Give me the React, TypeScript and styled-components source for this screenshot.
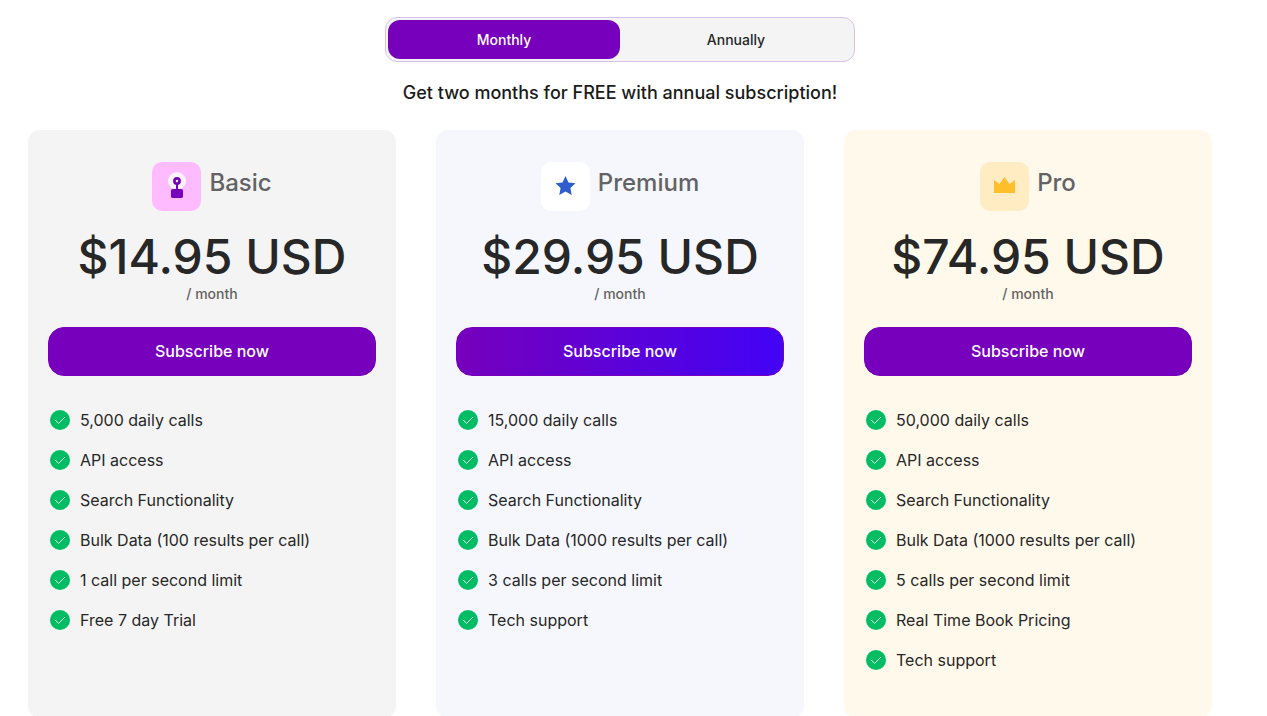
import React, { useState } from "react";
import styled, { createGlobalStyle } from "styled-components";

const GlobalStyle = createGlobalStyle`
  *, *::before, *::after { box-sizing: border-box; }
  body {
    margin: 0;
    background: #ffffff;
    color: #272727;
    font-family: Inter, "Liberation Sans", sans-serif;
    font-size: 16px;
  }
`;

const Page = styled.main`
  display: flex;
  flex-direction: column;
  align-items: center;
  padding: 17px 55px 0 28px;
`;

const Toggle = styled.div`
  display: flex;
  width: 100%;
  max-width: 470px;
  padding: 2px;
  border: 1px solid #d9c2ea;
  border-radius: 12px;
  background: #f4f4f4;
`;

const ToggleButton = styled.button<{ $active: boolean }>`
  flex: 1;
  height: 39px;
  padding: 0;
  border: 0;
  border-radius: 12px;
  background: ${(p) => (p.$active ? "#7600bc" : "transparent")};
  color: ${(p) => (p.$active ? "#ffffff" : "#272727")};
  font: 500 14px/20px Inter, "Liberation Sans", sans-serif;
  cursor: pointer;
`;

const Offer = styled.p`
  margin: 18px 0 24px;
  color: #1b1b1b;
  font-size: 18px;
  font-weight: 500;
  line-height: 26px;
  text-align: center;
`;

const Plans = styled.section`
  display: grid;
  grid-template-columns: repeat(3, minmax(0, 1fr));
  gap: 40px;
  width: 100%;
`;

const Card = styled.article<{ $background: string }>`
  display: flex;
  flex-direction: column;
  padding: 32px 20px 38px;
  border-radius: 12px;
  background: ${(p) => p.$background};
`;

const PlanHeader = styled.header`
  display: flex;
  justify-content: center;
  gap: 8px;
`;

const PlanIcon = styled.span<{ $background: string }>`
  display: flex;
  align-items: center;
  justify-content: center;
  width: 49px;
  height: 49px;
  border-radius: 10px;
  background: ${(p) => p.$background};
`;

const PlanName = styled.h2`
  margin: 0;
  color: #636363;
  font-size: 24px;
  font-weight: 500;
  line-height: 42px;
`;

const Price = styled.p`
  margin: 16px 0 0;
  font-size: 48px;
  font-weight: 500;
  line-height: 60px;
  text-align: center;
  white-space: nowrap;
`;

const Period = styled.p`
  margin: 0 0 27px;
  color: #636363;
  font-size: 14px;
  font-weight: 500;
  line-height: 13px;
  text-align: center;
`;

const Subscribe = styled.button<{ $gradient: boolean }>`
  height: 49px;
  padding: 0 6px 2px;
  border: 1px solid #7600bc;
  border-radius: 16px;
  background: ${(p) =>
    p.$gradient ? "linear-gradient(90deg, #7600bc, #4203f5)" : "#7600bc"};
  color: #ffffff;
  font: 500 16px/24px Inter, "Liberation Sans", sans-serif;
  cursor: pointer;
`;

const Features = styled.ul`
  margin: 24px 0 0;
  padding: 0 2px;
  list-style: none;
`;

const Feature = styled.li`
  display: flex;
  align-items: center;
  gap: 10px;
  height: 40px;
  line-height: 24px;
  white-space: nowrap;
`;

const BulbIcon = () => (
  <svg width="49" height="49" viewBox="0 0 49 49" aria-hidden="true">
    <circle cx="25" cy="19" r="9" fill="#fff3ff" />
    <path d="M25 21v8" stroke="#7600bc" strokeWidth="2" />
    <circle cx="25" cy="19" r="2.6" fill="#fff3ff" stroke="#7600bc" strokeWidth="2.6" />
    <rect x="19" y="27" width="12" height="9" rx="1.8" fill="#7600bc" />
  </svg>
);

const StarIcon = () => (
  <svg width="49" height="49" viewBox="0 0 49 49" aria-hidden="true">
    <path
      fill="#2f5dcc"
      d="M24.5 14l3 6.4 7 .9-5.1 4.8 1.3 6.9-6.2-3.4-6.2 3.4 1.3-6.9-5.1-4.8 7-.9z"
    />
  </svg>
);

const CrownIcon = () => (
  <svg width="49" height="49" viewBox="0 0 49 49" aria-hidden="true">
    <path fill="#ffbf2b" d="M14 31V18l5.5 4 5-7 5 7 5.5-4v13z" />
  </svg>
);

const CheckIcon = () => (
  <svg width="20" height="20" viewBox="0 0 20 20" aria-hidden="true">
    <circle cx="10" cy="10" r="10" fill="#00bc62" />
    <path d="M5 9.8l3.6 3.6 6.4-6.4" fill="none" stroke="#ffffff" strokeWidth=".9" />
  </svg>
);

interface Plan {
  name: string;
  price: string;
  background: string;
  iconBackground: string;
  icon: React.ReactNode;
  gradient: boolean;
  features: string[];
}

const plans: Plan[] = [
  {
    name: "Basic",
    price: "$14.95 USD",
    background: "#f4f4f4",
    iconBackground: "#ffbbff",
    icon: <BulbIcon />,
    gradient: false,
    features: [
      "5,000 daily calls",
      "API access",
      "Search Functionality",
      "Bulk Data (100 results per call)",
      "1 call per second limit",
      "Free 7 day Trial",
    ],
  },
  {
    name: "Premium",
    price: "$29.95 USD",
    background: "#f6f7fd",
    iconBackground: "#ffffff",
    icon: <StarIcon />,
    gradient: true,
    features: [
      "15,000 daily calls",
      "API access",
      "Search Functionality",
      "Bulk Data (1000 results per call)",
      "3 calls per second limit",
      "Tech support",
    ],
  },
  {
    name: "Pro",
    price: "$74.95 USD",
    background: "#fff9eb",
    iconBackground: "#ffecc2",
    icon: <CrownIcon />,
    gradient: false,
    features: [
      "50,000 daily calls",
      "API access",
      "Search Functionality",
      "Bulk Data (1000 results per call)",
      "5 calls per second limit",
      "Real Time Book Pricing",
      "Tech support",
    ],
  },
];

const periods = ["Monthly", "Annually"];

export default function App() {
  const [period, setPeriod] = useState("Monthly");

  return (
    <>
      <GlobalStyle />
      <Page>
        <Toggle role="group" aria-label="Billing period">
          {periods.map((name) => (
            <ToggleButton
              key={name}
              type="button"
              $active={period === name}
              aria-pressed={period === name}
              onClick={() => setPeriod(name)}
            >
              {name}
            </ToggleButton>
          ))}
        </Toggle>
        <Offer>Get two months for FREE with annual subscription!</Offer>
        <Plans>
          {plans.map((plan) => (
            <Card key={plan.name} $background={plan.background}>
              <PlanHeader>
                <PlanIcon $background={plan.iconBackground}>{plan.icon}</PlanIcon>
                <PlanName>{plan.name}</PlanName>
              </PlanHeader>
              <Price>{plan.price}</Price>
              <Period>/ month</Period>
              <Subscribe type="button" $gradient={plan.gradient}>
                Subscribe now
              </Subscribe>
              <Features>
                {plan.features.map((feature) => (
                  <Feature key={feature}>
                    <CheckIcon />
                    {feature}
                  </Feature>
                ))}
              </Features>
            </Card>
          ))}
        </Plans>
      </Page>
    </>
  );
}
